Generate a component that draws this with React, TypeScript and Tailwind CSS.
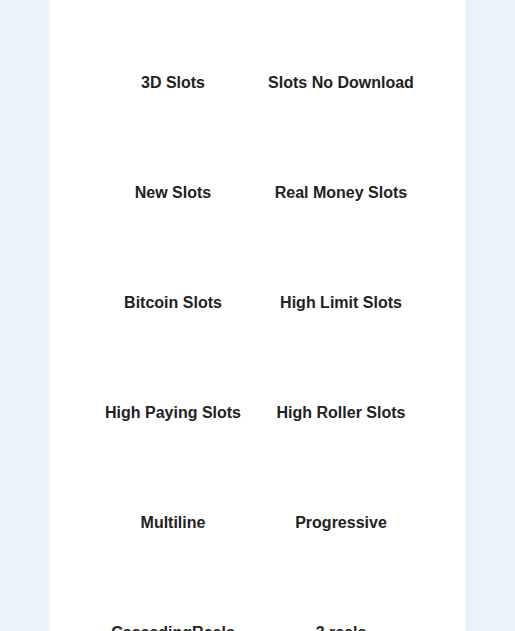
import React from "react";

const items = [
  "3D Slots",
  "Slots No Download",
  "New Slots",
  "Real Money Slots",
  "Bitcoin Slots",
  "High Limit Slots",
  "High Paying Slots",
  "High Roller Slots",
  "Multiline",
  "Progressive",
  "CascadingReels",
  "3 reels",
];

export default function App() {
  return (
    <div className="bg-[#eaf3fc] flex overflow-hidden h-[631px]" style={{ fontFamily: '"Liberation Sans", Arial, sans-serif' }}>
      <div className="w-[416px] ml-[49px] bg-white px-[40px] pt-[28px]">
        <div className="grid grid-cols-2">
          {items.map((t) => (
            <div key={t} className="h-[110px] flex items-center justify-center text-[16px] font-bold text-[#222]">
              {t}
            </div>
          ))}
        </div>
      </div>
    </div>
  );
}
